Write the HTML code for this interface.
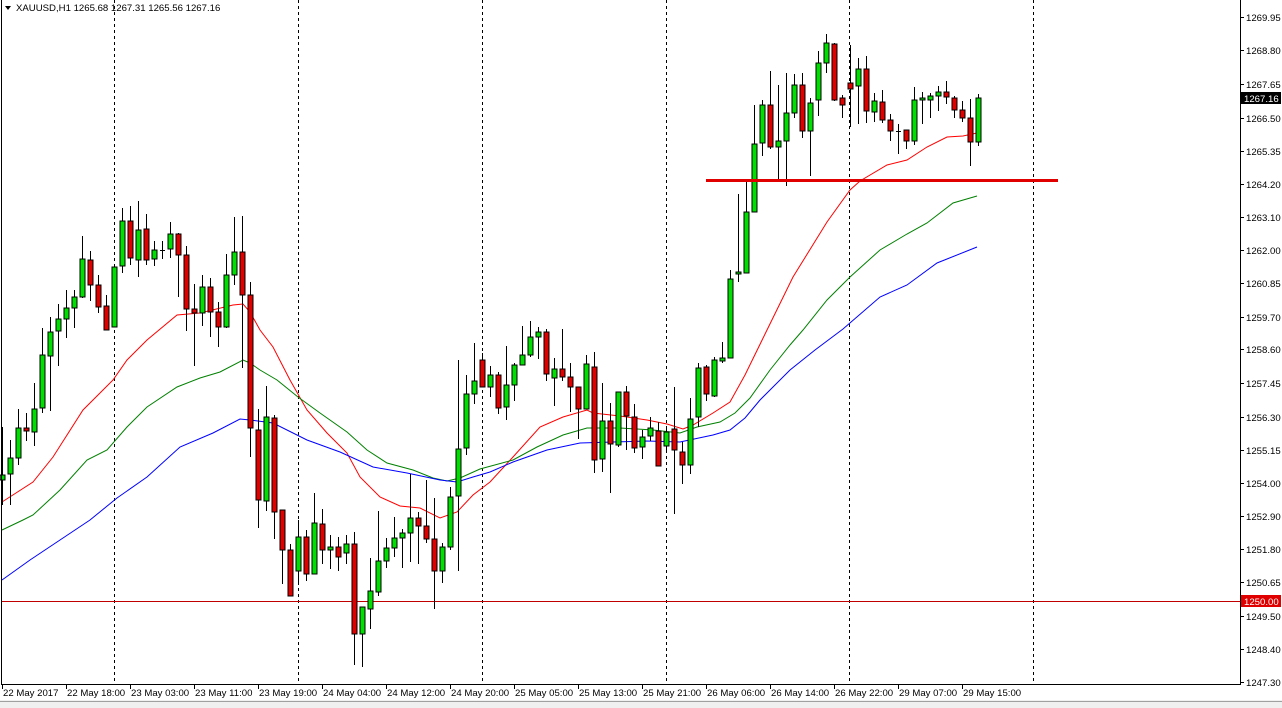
<!DOCTYPE html>
<html><head><meta charset="utf-8"><style>
body{margin:0;width:1282px;height:708px;overflow:hidden;background:#fff;font-family:"Liberation Sans",Tahoma,sans-serif}
svg{position:absolute;left:0;top:0}
svg text{font-family:"Liberation Sans",sans-serif;font-size:9.6px;fill:#000}
</style></head><body>
<svg id="s" width="1282" height="708" xmlns="http://www.w3.org/2000/svg">
<rect x="0" y="700" width="1282" height="8" fill="#f0f0f0"/>
<line x1="0" y1="701.5" x2="1282" y2="701.5" stroke="#a0a0a0"/>
<g id="grid" stroke="#000" stroke-dasharray="3,3" stroke-width="1"></g>
<line x1="2" y1="601.5" x2="1240" y2="601.5" stroke="#c00000" stroke-width="1"/>
<g id="ma"></g>
<g id="c"></g>
<line x1="706" y1="180.5" x2="1058" y2="180.5" stroke="#e00000" stroke-width="3"/>
<line x1="1.5" y1="0" x2="1.5" y2="685" stroke="#000"/>
<line x1="1" y1="684.5" x2="1240" y2="684.5" stroke="#000"/>
<line x1="1240.5" y1="0" x2="1240.5" y2="685" stroke="#000"/>
<g id="ax"></g>
<polygon points="5,6 11,6 8,10" fill="#000"/>
<text x="16" y="11">XAUUSD,H1  1265.68 1267.31 1265.56 1267.16</text>
<rect x="1241" y="92" width="40" height="12" fill="#000"/>
<text x="1244" y="102" style="fill:#fff">1267.16</text>
<rect x="1241" y="595" width="40" height="12" fill="#e00000"/>
<text x="1244" y="605" style="fill:#fff">1250.00</text>
</svg>
<script>
var NS="http://www.w3.org/2000/svg";
function el(p,t,a,txt){var e=document.createElementNS(NS,t);for(var k in a)e.setAttribute(k,a[k]);if(txt)e.textContent=txt;document.getElementById(p).appendChild(e);}
[115,299,483,667,850,1034].forEach(function(x){el('grid','line',{x1:x-.5,y1:0,x2:x-.5,y2:684});});
var lab=[["1269.95",17],["1268.80",50],["1267.65",84],["1266.50",118],["1265.35",151],["1264.20",184],["1263.10",217],["1262.00",250],["1260.85",283],["1259.70",317],["1258.60",349],["1257.45",383],["1256.30",417],["1255.15",450],["1254.00",483],["1252.90",516],["1251.80",549],["1250.65",582],["1249.50",616],["1248.40",649],["1247.30",682]];
lab.forEach(function(l){el('ax','line',{x1:1240,y1:l[1]+.5,x2:1244,y2:l[1]+.5,stroke:'#000'});el('ax','text',{x:1246,y:l[1]+4},l[0]);});
var tl=["22 May 2017","22 May 18:00","23 May 03:00","23 May 11:00","23 May 19:00","24 May 04:00","24 May 12:00","24 May 20:00","25 May 05:00","25 May 13:00","25 May 21:00","26 May 06:00","26 May 14:00","26 May 22:00","29 May 07:00","29 May 15:00"];
tl.forEach(function(t,i){var x=2+64*i;el('ax','line',{x1:x+.5,y1:684,x2:x+.5,y2:689,stroke:'#000'});el('ax','text',{x:x+1,y:696},t);});
var C=[[480,475,427,505],[474,458,440,505],[458,428,409,465],[428,431,413,441],[432,409,383,446],[408,355,328,413],[356,332,317,411],[331,319,304,366],[319,308,290,338],[308,297,290,328],[297,259,236,298],[260,285,251,301],[285,307,275,313],[306,330,295,330],[327,267,267,327],[266,221,208,273],[221,258,206,265],[260,230,201,277],[229,260,214,265],[259,250,241,266],[250,250,241,259],[249,234,222,258],[234,255,233,297],[255,309,246,331],[309,313,284,366],[313,287,275,326],[287,312,278,337],[312,327,302,347],[327,275,254,328],[275,252,217,285],[252,295,216,368],[295,428,282,457],[430,500,409,528],[501,417,386,511],[418,512,415,539],[510,550,510,584],[550,596,544,596],[571,537,520,583],[537,574,530,581],[574,523,493,574],[524,550,509,564],[550,547,535,569],[547,557,537,571],[553,544,535,564],[544,634,532,665],[634,607,607,667],[609,591,558,629],[592,561,511,596],[561,548,538,568],[548,538,517,557],[538,533,529,568],[533,518,474,562],[518,526,512,564],[526,539,480,543],[539,571,498,609],[571,547,543,583],[547,497,487,550],[496,449,360,571],[448,394,375,455],[394,381,343,404],[360,387,353,387],[387,375,366,397],[375,408,372,414],[407,385,346,420],[385,365,363,401],[365,355,326,365],[355,337,321,357],[337,332,327,359],[332,374,329,381],[378,369,358,406],[369,377,329,381],[377,387,363,412],[387,409,387,439],[409,364,355,409],[367,460,352,473],[459,421,383,472],[421,444,403,493],[445,392,392,447],[392,416,386,450],[417,448,404,453],[447,437,430,459],[436,428,417,441],[431,466,422,466],[446,432,429,450],[429,450,387,514],[452,465,442,484],[465,419,398,474],[417,368,363,427],[367,394,365,401],[396,360,357,397],[361,358,342,363],[358,279,270,358],[274,272,194,282],[273,212,180,273],[212,144,105,212],[143,105,100,156],[105,147,71,149],[147,141,85,180],[141,113,73,186],[113,85,74,118],[85,131,73,138],[131,103,98,176],[100,63,51,116],[63,43,34,73],[44,100,43,101],[98,105,95,118],[83,89,45,127],[86,69,58,124],[69,111,56,123],[112,101,93,122],[102,120,90,123],[120,131,114,141],[131,131,124,154],[130,141,130,149],[141,100,87,145],[100,98,92,124],[100,96,93,118],[96,92,86,111],[92,97,81,104],[98,110,96,118],[110,118,101,122],[118,142,99,166],[142,98,94,146]];
C.forEach(function(c,i){var x=2+8*i;var o=c[0],cl=c[1],h=c[2],l=c[3];
el('c','line',{x1:x+.5,y1:h,x2:x+.5,y2:l,stroke:'#000'});
var top=Math.min(o,cl),bh=Math.abs(o-cl);
if(bh<1){el('c','line',{x1:x-2,y1:top+.5,x2:x+3,y2:top+.5,stroke:'#000'});}
else el('c','rect',{x:x-2,y:top,width:5,height:bh,fill:(cl<o?'#00e000':'#e00000'),stroke:'#000','stroke-width':1});});
var red=[[2,502],[33,482],[53,457],[83,410],[100,393],[113,380],[127,360],[147,340],[177,315],[200,313],[233,305],[243,304],[250,312],[260,330],[273,347],[290,380],[307,410],[327,433],[347,453],[360,477],[380,497],[400,506],[420,508],[440,518],[457,512],[473,495],[490,482],[513,457],[540,427],[563,417],[587,410],[593,413],[620,416],[647,420],[667,424],[683,429],[693,425],[713,413],[730,402],[745,375],[767,330],[793,277],[827,222],[850,190],[860,181],[887,165],[907,160],[927,147],[947,137],[963,136],[977,133]];
var grn=[[2,530],[23,520],[33,515],[60,490],[87,460],[107,450],[127,427],[147,407],[177,387],[200,378],[220,372],[243,360],[250,363],[260,370],[277,380],[298,397],[320,413],[347,432],[367,450],[387,463],[413,470],[433,478],[447,481],[460,478],[480,469],[513,460],[537,447],[563,435],[587,428],[620,428],[653,430],[680,433],[697,427],[720,422],[735,413],[750,398],[770,370],[790,345],[803,330],[827,300],[850,277],[880,250],[907,234],[927,223],[953,203],[977,196]];
var blu=[[2,580],[30,560],[60,540],[90,520],[117,498],[147,477],[180,447],[213,433],[240,419],[250,420],[273,423],[307,440],[340,452],[373,467],[407,473],[440,480],[457,482],[473,477],[490,472],[513,462],[547,450],[580,443],[613,442],[647,441],[680,442],[713,435],[730,430],[745,418],[760,400],[790,370],[815,350],[843,329],[880,297],[907,285],[937,263],[977,247]];
[[red,'#ff0000'],[grn,'#008000'],[blu,'#0000ff']].forEach(function(m){el('ma','polyline',{points:m[0].map(function(p){return p.join(',')}).join(' '),fill:'none',stroke:m[1],'stroke-width':1});});
</script>
</body></html>
